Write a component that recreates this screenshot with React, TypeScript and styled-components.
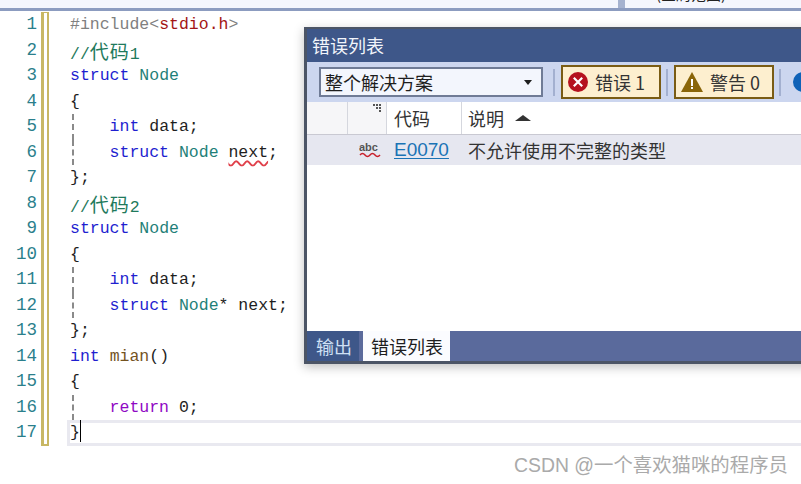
import React from 'react';
import styled, { createGlobalStyle } from 'styled-components';

const GlobalStyle = createGlobalStyle`
  html, body {
    margin: 0;
    padding: 0;
    background: #fff;
    overflow: hidden;
  }
`;

const cjk = `"Noto Sans CJK SC", "Liberation Sans", sans-serif`;

const Page = styled.div`
  position: relative;
  width: 801px;
  height: 484px;
  overflow: hidden;
  background: #fff;
`;

const TabStrip = styled.div`
  display: flex;
  height: 8px;
  background: #f4f6fd;
  border-bottom: 3px solid #8c9cc0;
  overflow: hidden;
`;

const StripCell = styled.div<{ $width: number; $pad: number; $gap?: boolean }>`
  width: ${p => p.$width}px;
  padding-left: ${p => p.$pad}px;
  box-sizing: border-box;
  border-right: ${p => (p.$gap ? '7px solid #a5b2cf' : 'none')};
  font: 15px ${cjk};
  line-height: 8px;
  color: #222;
  white-space: nowrap;
  overflow: hidden;
`;

const ClippedText = styled.div`
  margin-top: -10px;
`;

const Editor = styled.div`
  display: flex;
  padding-top: 1px;
`;

const Gutter = styled.div`
  width: 37px;
  flex: none;
`;

const LineNo = styled.div`
  height: 25.5px;
  text-align: right;
  font: 17.5px/25.5px "Liberation Mono", monospace;
  color: #2b7f8c;
`;

const ChangeBar = styled.div`
  width: 8px;
  height: 434px;
  flex: none;
  margin-left: 4px;
  box-sizing: border-box;
  border: solid #c8b764;
  border-width: 1px 2px 2px 3px;
  background: #fff;
`;

const Code = styled.div`
  flex: 1;
  padding-left: 18px;
`;

const Row = styled.div<{ $guide?: boolean; $current?: boolean }>`
  position: relative;
  height: 25.5px;
  padding-left: 3px;
  font: 16.5px/25.5px "Liberation Mono", monospace;
  white-space: pre;
  color: #1e1e1e;
  &::before {
    content: '';
    display: ${p => (p.$guide ? 'block' : 'none')};
    position: absolute;
    left: 5px;
    top: 0;
    bottom: 0;
    border-left: 2px dashed #8a8a8a;
  }
  ${p =>
    p.$current &&
    `
    box-shadow: inset 0 3px 0 #e9e9f0, inset 0 -3px 0 #e9e9f0, inset 3px 0 0 #e9e9f0;
  `}
`;

const Kw = styled.span`
  color: #1f1fd0;
`;
const Ctl = styled.span`
  color: #8f08c4;
`;
const Type = styled.span`
  color: #1f7f78;
`;
const Fn = styled.span`
  color: #74531f;
`;
const Comment = styled.span`
  color: #1f7a5c;
`;
const Macro = styled.span`
  color: #808080;
`;
const Str = styled.span`
  color: #a31515;
`;
const Wide = styled.span`
  font-family: ${cjk};
  font-size: 19px;
  letter-spacing: 1px;
`;
const Squiggle = styled.span`
  text-decoration: underline wavy #e0404a 1.5px;
  text-underline-offset: 3px;
`;
const Caret = styled.span`
  display: inline-block;
  width: 1px;
  height: 22px;
  background: #000;
  vertical-align: -5px;
`;

const ErrorWindow = styled.div`
  position: absolute;
  left: 304px;
  top: 27px;
  width: 520px;
  height: 337px;
  box-sizing: border-box;
  border: solid #4c5566;
  border-width: 2px 0 3px 3px;
  display: flex;
  flex-direction: column;
  background: #fff;
  box-shadow: 0 3px 10px rgba(0, 0, 0, 0.25);
`;

const TitleBar = styled.div`
  height: 33px;
  flex: none;
  background: #3e5789;
  color: #f2f5fb;
  font: 18px/32px ${cjk};
  padding-left: 5px;
`;

const Toolbar = styled.div`
  height: 40px;
  flex: none;
  display: flex;
  align-items: center;
  background: #ccd6ef;
  padding-left: 12px;
`;

const Select = styled.div`
  width: 224px;
  height: 30px;
  box-sizing: border-box;
  border: 2px solid #6f7b96;
  background: #f3f6fd;
  display: flex;
  align-items: center;
  justify-content: space-between;
  padding: 0 9px 0 4px;
  margin-right: 5px;
  font: 18px ${cjk};
  color: #1e1e1e;
  flex: none;
`;

const Caretdown = styled.span`
  width: 0;
  height: 0;
  border: 4px solid transparent;
  border-top: 5px solid #1e1e1e;
  border-bottom: none;
`;

const ToolSep = styled.span`
  width: 2px;
  height: 27px;
  margin: 0 6px 0 5px;
  background: #a3b0d0;
  flex: none;
`;

const FilterButton = styled.div`
  width: 100px;
  height: 34px;
  box-sizing: border-box;
  border: 2px solid #7a5c14;
  background: #fdefcf;
  display: flex;
  align-items: center;
  gap: 7px;
  padding-left: 5px;
  font: 18px ${cjk};
  color: #333;
  white-space: nowrap;
  flex: none;
`;

const InfoDot = styled.span`
  width: 20px;
  height: 20px;
  border-radius: 50%;
  background: #0f62b8;
  margin-left: 6px;
  flex: none;
`;

const ColumnHeader = styled.div`
  height: 33px;
  flex: none;
  display: flex;
  background: #fff;
  color: #333;
  font: 18px/33px ${cjk};
  box-sizing: border-box;
  border-bottom: 1px solid #c9c9d2;
`;

const HeadCell = styled.div<{ $width?: number }>`
  position: relative;
  width: ${p => (p.$width ? `${p.$width}px` : 'auto')};
  flex: ${p => (p.$width ? 'none' : 1)};
  box-sizing: border-box;
  padding-left: ${p => (p.$width ? 7 : 6)}px;
  border-right: ${p => (p.$width ? '1px solid #d5d7de' : 'none')};
  display: flex;
  align-items: center;
  gap: 11px;
  height: 32px;
  background: ${p => (p.$width && p.$width < 60 ? '#f6f6f8' : '#fff')};
`;

const SortArrow = styled.span`
  width: 0;
  height: 0;
  border: 8px solid transparent;
  border-bottom: 6px solid #333;
  border-top: none;
`;

const GripDots = styled.svg`
  position: absolute;
  right: 5px;
  top: 2px;
`;

const ErrorRow = styled.div`
  height: 30px;
  flex: none;
  display: flex;
  background: #e6e7f0;
  font: 18px/30px ${cjk};
  color: #333;
`;

const IconCell = styled.div`
  width: 87px;
  flex: none;
  display: flex;
  justify-content: flex-end;
  align-items: center;
  padding-right: 13px;
  box-sizing: border-box;
`;

const CodeCell = styled.div`
  width: 74px;
  flex: none;
  color: #1a73b5;
  text-decoration: underline;
  text-underline-offset: 2px;
  font-family: "Liberation Sans", sans-serif;
  font-size: 19px;
`;

const RowBody = styled.div`
  flex: 1;
  background: #fff;
`;

const BottomTabs = styled.div`
  height: 30px;
  flex: none;
  display: flex;
  background: #5a6a9c;
`;

const BottomTab = styled.div<{ $active?: boolean }>`
  height: 30px;
  padding: 0 7px 0 ${p => (p.$active ? 8 : 9)}px;
  margin-right: ${p => (p.$active ? 0 : 4)}px;
  background: ${p => (p.$active ? '#fbfcff' : '#3e5789')};
  color: ${p => (p.$active ? '#1e1e1e' : '#cfe0f5')};
  font: 18px/31px ${cjk};
`;

const Watermark = styled.div`
  position: absolute;
  left: 514px;
  top: 454px;
  font: 19.4px/22px "Liberation Sans", ${cjk};
  color: #aaaaaa;
  white-space: nowrap;
`;

const ErrorIcon = () => (
  <svg width="20" height="20" viewBox="0 0 20 20">
    <circle cx="10" cy="10" r="10" fill="#b5121e" />
    <path d="M5.8 5.8l8.4 8.4M14.2 5.8l-8.4 8.4" stroke="#fff" strokeWidth="2.2" />
  </svg>
);

const WarnIcon = () => (
  <svg width="22" height="20" viewBox="0 0 22 20">
    <path d="M11 0L22 20H0Z" fill="#8a6508" />
    <rect x="10" y="7" width="2" height="7" fill="#fff" />
    <rect x="10" y="15" width="2" height="2" fill="#fff" />
  </svg>
);

const AbcIcon = () => (
  <svg width="22" height="16" viewBox="0 0 22 16">
    <text x="0" y="9" fontSize="11" fontWeight="700" fontFamily="Liberation Sans, sans-serif" fill="#555">
      abc
    </text>
    <path d="M1 13q2.5-3 5 0t5 0 5 0 5 0" fill="none" stroke="#c8202c" strokeWidth="1.5" />
  </svg>
);

const App: React.FC = () => {
  const numbers = Array.from({ length: 17 }, (_, i) => i + 1);

  return (
    <Page>
      <GlobalStyle />
      <TabStrip>
        <StripCell $width={625} $pad={0} $gap>
          <ClippedText>2022.11.02</ClippedText>
        </StripCell>
        <StripCell $width={176} $pad={31}>
          <ClippedText>(全局范围)</ClippedText>
        </StripCell>
      </TabStrip>

      <Editor>
        <Gutter>
          {numbers.map(n => (
            <LineNo key={n}>{n}</LineNo>
          ))}
        </Gutter>
        <ChangeBar />
        <Code>
          <Row>
            <Macro>#include</Macro>
            <Macro>&lt;</Macro>
            <Str>stdio.h</Str>
            <Macro>&gt;</Macro>
          </Row>
          <Row>
            <Comment>
              //<Wide>代码</Wide>1
            </Comment>
          </Row>
          <Row>
            <Kw>struct</Kw> <Type>Node</Type>
          </Row>
          <Row>{'{'}</Row>
          <Row $guide>
            {'    '}
            <Kw>int</Kw> data;
          </Row>
          <Row $guide>
            {'    '}
            <Kw>struct</Kw> <Type>Node</Type> <Squiggle>next</Squiggle>;
          </Row>
          <Row>{'};'}</Row>
          <Row>
            <Comment>
              //<Wide>代码</Wide>2
            </Comment>
          </Row>
          <Row>
            <Kw>struct</Kw> <Type>Node</Type>
          </Row>
          <Row>{'{'}</Row>
          <Row $guide>
            {'    '}
            <Kw>int</Kw> data;
          </Row>
          <Row $guide>
            {'    '}
            <Kw>struct</Kw> <Type>Node</Type>* next;
          </Row>
          <Row>{'};'}</Row>
          <Row>
            <Kw>int</Kw> <Fn>mian</Fn>()
          </Row>
          <Row>{'{'}</Row>
          <Row $guide>
            {'    '}
            <Ctl>return</Ctl> 0;
          </Row>
          <Row $current>
            {'}'}
            <Caret />
          </Row>
        </Code>
      </Editor>

      <ErrorWindow>
        <TitleBar>错误列表</TitleBar>
        <Toolbar>
          <Select>
            整个解决方案
            <Caretdown />
          </Select>
          <ToolSep />
          <FilterButton>
            <ErrorIcon />
            错误 1
          </FilterButton>
          <ToolSep />
          <FilterButton>
            <WarnIcon />
            警告 0
          </FilterButton>
          <ToolSep />
          <InfoDot />
        </Toolbar>
        <ColumnHeader>
          <HeadCell $width={41} />
          <HeadCell $width={39}>
            <GripDots width="8" height="8" viewBox="0 0 8 8">
              <path d="M0 0h2v2H0zM3 0h2v2H3zM6 0h2v2H6zM3 3h2v2H3zM6 3h2v2H6zM6 6h2v2H6z" fill="#555" />
            </GripDots>
          </HeadCell>
          <HeadCell $width={75}>代码</HeadCell>
          <HeadCell>
            说明
            <SortArrow />
          </HeadCell>
        </ColumnHeader>
        <ErrorRow>
          <IconCell>
            <AbcIcon />
          </IconCell>
          <CodeCell>E0070</CodeCell>
          不允许使用不完整的类型
        </ErrorRow>
        <RowBody />
        <BottomTabs>
          <BottomTab>输出</BottomTab>
          <BottomTab $active>错误列表</BottomTab>
        </BottomTabs>
      </ErrorWindow>

      <Watermark>CSDN @一个喜欢猫咪的程序员</Watermark>
    </Page>
  );
};

export default App;
